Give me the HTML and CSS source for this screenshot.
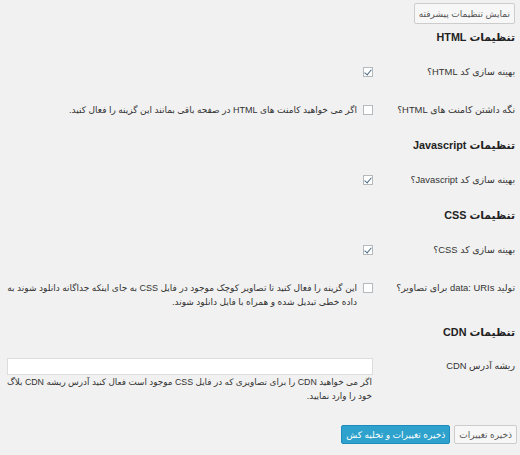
FILE: index.html
```html
<!DOCTYPE html>
<html lang="fa" dir="rtl">

<head>
    <meta charset="UTF-8">
    <title>تنظیمات</title>
    <link rel="stylesheet" href="styles.css">
</head>

<body>
    <div class="wrap">
        <div class="toolbar">
            <button class="btn">نمایش تنظیمات پیشرفته</button>
        </div>

        <h3 class="title title-first">تنظیمات HTML</h3>
        <div class="row">
            <div class="label">بهینه سازی کد HTML؟</div>
            <div class="field"><span class="check on"></span></div>
        </div>
        <div class="row">
            <div class="label">نگه داشتن کامنت های HTML؟</div>
            <div class="field"><span class="check"></span><span class="desc">اگر می خواهید کامنت های HTML در صفحه باقی بمانند این گزینه را فعال کنید.</span></div>
        </div>

        <h3 class="title">تنظیمات Javascript</h3>
        <div class="row">
            <div class="label">بهینه سازی کد Javascript؟</div>
            <div class="field"><span class="check on"></span></div>
        </div>

        <h3 class="title">تنظیمات CSS</h3>
        <div class="row">
            <div class="label">بهینه سازی کد CSS؟</div>
            <div class="field"><span class="check on"></span></div>
        </div>
        <div class="row row-tight">
            <div class="label">تولید data: URIs برای تصاویر؟</div>
            <div class="field"><span class="check"></span><span class="desc">این گزینه را فعال کنید تا تصاویر کوچک موجود در فایل CSS به جای اینکه جداگانه دانلود شوند به داده خطی تبدیل شده و همراه با فایل دانلود شوند.</span></div>
        </div>

        <h3 class="title">تنظیمات CDN</h3>
        <div class="row row-cdn">
            <div class="label">ریشه آدرس CDN</div>
            <div class="field field-col">
                <input class="text" type="text">
                <p class="note">اگر می خواهید CDN را برای تصاویری که در فایل CSS موجود است فعال کنید آدرس ریشه CDN بلاگ<br>خود را وارد نمایید.</p>
            </div>
        </div>

        <div class="actions">
            <button class="btn">ذخیره تغییرات</button>
            <button class="btn btn-primary">ذخیره تغییرات و تخلیه کش</button>
        </div>
    </div>
</body>

</html>
```

FILE: styles.css
```css
* {
    padding: 0;
    margin: 0;
    box-sizing: border-box;
}
body {
    background: #f1f1f1;
    color: #333;
    font-family: "Liberation Sans", "DejaVu Sans", sans-serif;
    font-size: 9.4px;
}
.wrap {
    padding: 3px 5px 0 7px;
}
.toolbar {
    display: flex;
}
.btn {
    font-family: inherit;
    font-size: 9px;
    color: #555;
    background: #f7f7f7;
    border: 1px solid #ccc;
    border-radius: 2px;
    height: 21px;
    padding: 0 4px;
}
.btn-primary {
    background: #2ea2cc;
    border-color: #1e8cbe;
    color: #fff;
}
.title {
    font-size: 10.8px;
    font-weight: bold;
    color: #222;
    line-height: 16px;
    padding: 8px 0;
}
.title-first {
    padding-top: 5px;
}
.row {
    display: flex;
    align-items: flex-start;
    padding: 12px 0;
    line-height: 14px;
}
.row-tight {
    padding-bottom: 7px;
}
.label {
    width: 142px;
    flex: none;
}
.field {
    flex: 1;
    display: flex;
    align-items: flex-start;
    font-size: 9px;
}
.check {
    flex: none;
    width: 10px;
    height: 10px;
    margin: 2px 0 0 6px;
    border: 1px solid #b4b9be;
    background: #fff;
    position: relative;
}
.check.on::after {
    content: "";
    position: absolute;
    left: 2px;
    top: 0;
    width: 3px;
    height: 6px;
    border: solid #4a6a8a;
    border-width: 0 1.5px 1.5px 0;
    transform: rotate(40deg);
}
.desc {
    flex: 1;
}
.row-cdn {
    padding-top: 10px;
}
.row-cdn .label {
    padding-top: 1px;
}
.field-col {
    flex-direction: column;
    align-items: stretch;
}
.text {
    height: 17px;
    width: 366px;
    border: 1px solid #ddd;
    background: #fff;
}
.note {
    font-size: 8.8px;
    padding-right: 1px;
    margin-left: -7px;
    white-space: nowrap;
}
.actions {
    display: flex;
    gap: 4px;
    margin-top: 10px;
    margin-right: -2px;
}
.actions .btn {
    height: 19px;
}
```
